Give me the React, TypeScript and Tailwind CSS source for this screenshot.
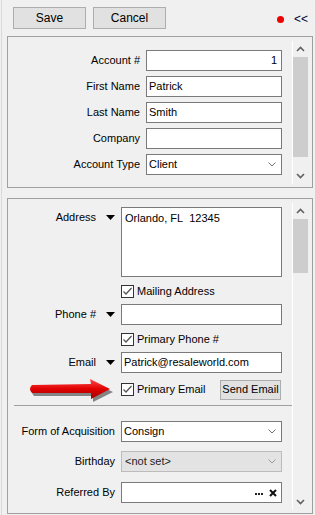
import React from 'react';

function Chevron({ up, color = '#606060' }: { up?: boolean; color?: string }) {
  return (
    <svg width="9" height="6" viewBox="0 0 9 6">
      <polyline
        points={up ? '1,5 4.5,1.5 8,5' : '1,1 4.5,4.5 8,1'}
        fill="none"
        stroke={color}
        strokeWidth={1.6}
      />
    </svg>
  );
}

function SelectArrow({ color = '#707070' }: { color?: string }) {
  return (
    <svg width="8" height="5" viewBox="0 0 8 5">
      <polyline points="0.5,0.5 4,4 7.5,0.5" fill="none" stroke={color} strokeWidth={1} />
    </svg>
  );
}

function DropTri() {
  return (
    <svg width="9" height="5" viewBox="0 0 9 5" className="ml-[10px] shrink-0">
      <polygon points="0,0 9,0 4.5,5" fill="#000" />
    </svg>
  );
}

function CheckBox({ label }: { label: string }) {
  return (
    <div className="flex items-center">
      <svg width="13" height="13" viewBox="0 0 13 13" className="shrink-0">
        <rect x="0.5" y="0.5" width="12" height="12" fill="#fff" stroke="#333" />
        <polyline points="2.5,6.5 5,9 10.5,3" fill="none" stroke="#555" strokeWidth={1.3} />
      </svg>
      <span className="ml-[3px]">{label}</span>
    </div>
  );
}

function Scroll({ top, thumb }: { top: string; thumb: string }) {
  return (
    <div className={`w-[20px] flex flex-col border-l border-white mb-[3px] ${top}`}>
      <div className="w-[15px] h-[16px] flex items-center justify-center">
        <Chevron up />
      </div>
      <div className={`w-[15px] bg-[#cdcdcd] ${thumb}`} />
      <div className="flex-1" />
      <div className="w-[15px] h-[16px] flex items-center justify-center">
        <Chevron />
      </div>
    </div>
  );
}

function Row1({ label, children }: { label: string; children: React.ReactNode }) {
  return (
    <div className="flex items-center h-[21px]">
      <div className="w-[132px] text-right">{label}</div>
      <div className="ml-[6px] w-[136px] h-[21px] bg-white border border-[#7a7a7a] flex items-center px-[2px]">
        {children}
      </div>
    </div>
  );
}

export default function App() {
  return (
    <div className="w-[315px] h-[515px] bg-[#f0f0f0] overflow-hidden relative font-['Liberation_Sans',Arial,sans-serif] text-[11px] text-black">
      <div className="absolute left-[1px] top-0 bottom-0 w-px bg-[#dadada]" />

      {/* toolbar */}
      <div className="h-[36px] flex items-start pt-[7px] pl-[13px]">
        <button className="w-[73px] h-[22px] bg-[#e1e1e1] border border-[#adadad] text-[12px]">Save</button>
        <button className="ml-[7px] w-[73px] h-[22px] bg-[#e1e1e1] border border-[#adadad] text-[12px]">Cancel</button>
        <div className="ml-auto mt-[9px] w-[7px] h-[7px] rounded-full bg-[#ee0000]" />
        <div className="ml-[10px] mr-[7px] mt-[5px] text-[12px] leading-[14px] text-[#000033]">&lt;&lt;</div>
      </div>

      {/* account panel */}
      <div className="ml-[7px] w-[306px] h-[152px] border border-[#a0a0a0] flex">
        <div className="w-[284px] pt-[13px] flex flex-col gap-[5px]">
          <Row1 label="Account #">
            <span className="ml-auto pr-[2px]">1</span>
          </Row1>
          <Row1 label="First Name">Patrick</Row1>
          <Row1 label="Last Name">Smith</Row1>
          <Row1 label="Company">{null}</Row1>
          <Row1 label="Account Type">
            <span className="flex-1">Client</span>
            <span className="mr-[3px]">
              <SelectArrow />
            </span>
          </Row1>
        </div>
        <Scroll top="mt-[4px]" thumb="h-[100px]" />
      </div>

      {/* contact panel */}
      <div className="ml-[7px] mt-[10px] w-[306px] h-[316px] border border-[#a0a0a0] flex">
        <div className="w-[284px] pt-[8px] flex flex-col">
          <div className="flex items-start">
            <div className="w-[107px] h-[21px] flex items-center justify-end">
              Address
              <DropTri />
            </div>
            <div className="ml-[6px] w-[161px] h-[70px] bg-white border border-[#7a7a7a] px-[3px] pt-[2px]">
              Orlando, FL&nbsp; 12345
            </div>
          </div>

          <div className="mt-[4px] h-[21px] ml-[113px] flex items-center">
            <CheckBox label="Mailing Address" />
          </div>

          <div className="mt-[2px] flex items-center">
            <div className="w-[107px] h-[21px] flex items-center justify-end">
              Phone #
              <DropTri />
            </div>
            <div className="ml-[6px] w-[161px] h-[21px] bg-white border border-[#7a7a7a]" />
          </div>

          <div className="mt-[4px] h-[21px] ml-[113px] flex items-center">
            <CheckBox label="Primary Phone #" />
          </div>

          <div className="mt-[2px] flex items-center">
            <div className="w-[107px] h-[21px] flex items-center justify-end">
              Email
              <DropTri />
            </div>
            <div className="ml-[6px] w-[161px] h-[21px] bg-white border border-[#7a7a7a] flex items-center px-[2px]">
              Patrick@resaleworld.com
            </div>
          </div>

          <div className="mt-[6px] h-[21px] ml-[113px] w-[160px] flex items-center justify-between">
            <CheckBox label="Primary Email" />
            <button className="w-[61px] h-[20px] bg-[#e1e1e1] border border-[#adadad]">Send Email</button>
          </div>

          <div className="mt-[5px] ml-[6px] h-px bg-[#a0a0a0]" />

          <div className="mt-[15px] flex items-center">
            <div className="w-[107px] text-right">Form of Acquisition</div>
            <div className="ml-[6px] w-[161px] h-[21px] bg-white border border-[#7a7a7a] flex items-center px-[2px]">
              <span className="flex-1">Consign</span>
              <span className="mr-[3px]">
                <SelectArrow />
              </span>
            </div>
          </div>

          <div className="mt-[9px] flex items-center">
            <div className="w-[107px] text-right">Birthday</div>
            <div className="ml-[6px] w-[161px] h-[21px] bg-[#e3e3e3] border border-[#bcbcbc] flex items-center px-[3px] text-[#222]">
              <span className="flex-1">&lt;not set&gt;</span>
              <span className="mr-[2px]">
                <SelectArrow color="#9a9a9a" />
              </span>
            </div>
          </div>

          <div className="mt-[10px] flex items-center">
            <div className="w-[107px] text-right">Referred By</div>
            <div className="ml-[6px] w-[161px] h-[21px] bg-white border border-[#7a7a7a] flex items-center justify-end pr-[4px]">
              <svg width="8" height="2" viewBox="0 0 8 2" className="mt-[3px]">
                <rect x="0" y="0" width="2" height="2" fill="#222" />
                <rect x="3" y="0" width="2" height="2" fill="#222" />
                <rect x="6" y="0" width="2" height="2" fill="#222" />
              </svg>
              <svg width="8" height="8" viewBox="0 0 8 8" className="ml-[6px]">
                <path d="M1 1 L7 7 M7 1 L1 7" stroke="#111" strokeWidth={2} />
              </svg>
            </div>
          </div>
        </div>
        <Scroll top="mt-[4px]" thumb="h-[54px]" />
      </div>

      {/* red annotation arrow */}
      <svg className="absolute left-[28px] top-[376px]" width="90" height="30" viewBox="0 0 90 30">
        <defs>
          <linearGradient id="redg" x1="0" y1="0" x2="0" y2="1">
            <stop offset="0" stopColor="#ff4a4a" />
            <stop offset="0.5" stopColor="#e00000" />
            <stop offset="1" stopColor="#a00000" />
          </linearGradient>
        </defs>
        <path
          d="M6 12 L65 11 L64 6 L85 16 L65 26 L65 20 L6 20 Q2 16 6 12 Z"
          fill="#000"
          opacity="0.45"
        />
        <path d="M4 9 L63 8 L62 3 L82 13 L63 23 L63 17 L4 17 Q0 13 4 9 Z" fill="url(#redg)" />
      </svg>
    </div>
  );
}
